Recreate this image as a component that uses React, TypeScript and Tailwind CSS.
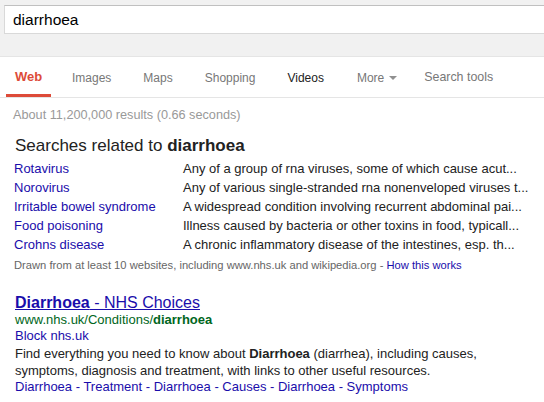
import React from "react";

const related = [
  ["Rotavirus", "Any of a group of rna viruses, some of which cause acut..."],
  ["Norovirus", "Any of various single-stranded rna nonenveloped viruses t..."],
  ["Irritable bowel syndrome", "A widespread condition involving recurrent abdominal pai..."],
  ["Food poisoning", "Illness caused by bacteria or other toxins in food, typicall..."],
  ["Crohns disease", "A chronic inflammatory disease of the intestines, esp. th..."],
];

const tabs = ["Images", "Maps", "Shopping", "Videos"];

export default function App() {
  return (
    <div className="w-[544px] h-[402px] overflow-hidden bg-white text-[13px] text-[#222]" style={{ fontFamily: '"Liberation Sans", Arial, sans-serif' }}>
      {/* Header */}
      <div className="h-[57px] bg-[#f1f1f1] border-b border-[#e5e5e5] pt-[5px] pl-[4px]">
        <div className="w-[580px] h-[29px] bg-white border border-[#d9d9d9] border-t-[#c0c0c0] pl-[8px] flex items-center text-[15.5px] text-black">
          diarrhoea
        </div>
      </div>

      {/* Tabs */}
      <div className="h-[41px] border-b border-[#e5e5e5] flex items-end pl-[6px] text-[12px] text-[#777]">
        <div className="w-[45px] h-[40px] flex items-center justify-center border-b-[3px] border-[#dd4b39] text-[13px] text-[#dd4b39] font-bold pt-[2px]">
          Web
        </div>
        <div className="flex items-center h-[40px] pt-[1px] ml-[21px] gap-[32px]">
          {tabs.map((t) => (
            <span key={t} className={t === "Videos" ? "text-[#222]" : ""}>{t}</span>
          ))}
          <span className="flex items-center gap-[5px] ml-[1px]">
            More
            <span className="w-0 h-0 border-l-[4px] border-r-[4px] border-t-[4px] border-l-transparent border-r-transparent border-t-[#909090]" />
          </span>
          <span className="ml-[-5px] text-[12.4px]">Search tools</span>
        </div>
      </div>

      <div className="pl-[13px]">
        <div className="mt-[9px] text-[12.7px] text-[#999] leading-[16px]">About 11,200,000 results (0.66 seconds)</div>

        <div className="mt-[13px] pl-[2px] text-[17px] leading-[20px] text-[#222]">
          Searches related to <b>diarrhoea</b>
        </div>
        <div className="mt-[3px] pl-[1px]">
          {related.map(([a, b]) => (
            <div key={a} className="flex h-[19px] items-center">
              <span className="w-[169px] text-[#1a0dab]">{a}</span>
              <span className="whitespace-nowrap">{b}</span>
            </div>
          ))}
        </div>
        <div className="mt-[4px] pl-[1px] text-[11.2px] text-[#666] leading-[14px] whitespace-nowrap">
          Drawn from at least 10 websites, including www.nhs.uk and wikipedia.org - <span className="text-[#1a0dab]">How this works</span>
        </div>

        <div className="mt-[21px] pl-[2px]">
          <div className="text-[16px] leading-[19px] text-[#1a0dab]">
            <span className="underline"><b>Diarrhoea</b> - NHS Choices</span>
          </div>
          <div className="text-[#006621] leading-[16px]">
            www.nhs.uk/Conditions/<b>diarrhoea</b>
          </div>
          <div className="text-[#1a0dab] leading-[16px]">Block nhs.uk</div>
          <div className="leading-[17px] mt-[1px]">
            Find everything you need to know about <b>Diarrhoea</b> (diarrhea), including causes,
            <br />
            symptoms, diagnosis and treatment, with links to other useful resources.
          </div>
          <div className="text-[#1a0dab] leading-[16px]">
            Diarrhoea - Treatment - Diarrhoea - Causes - Diarrhoea - Symptoms
          </div>
        </div>
      </div>
    </div>
  );
}
